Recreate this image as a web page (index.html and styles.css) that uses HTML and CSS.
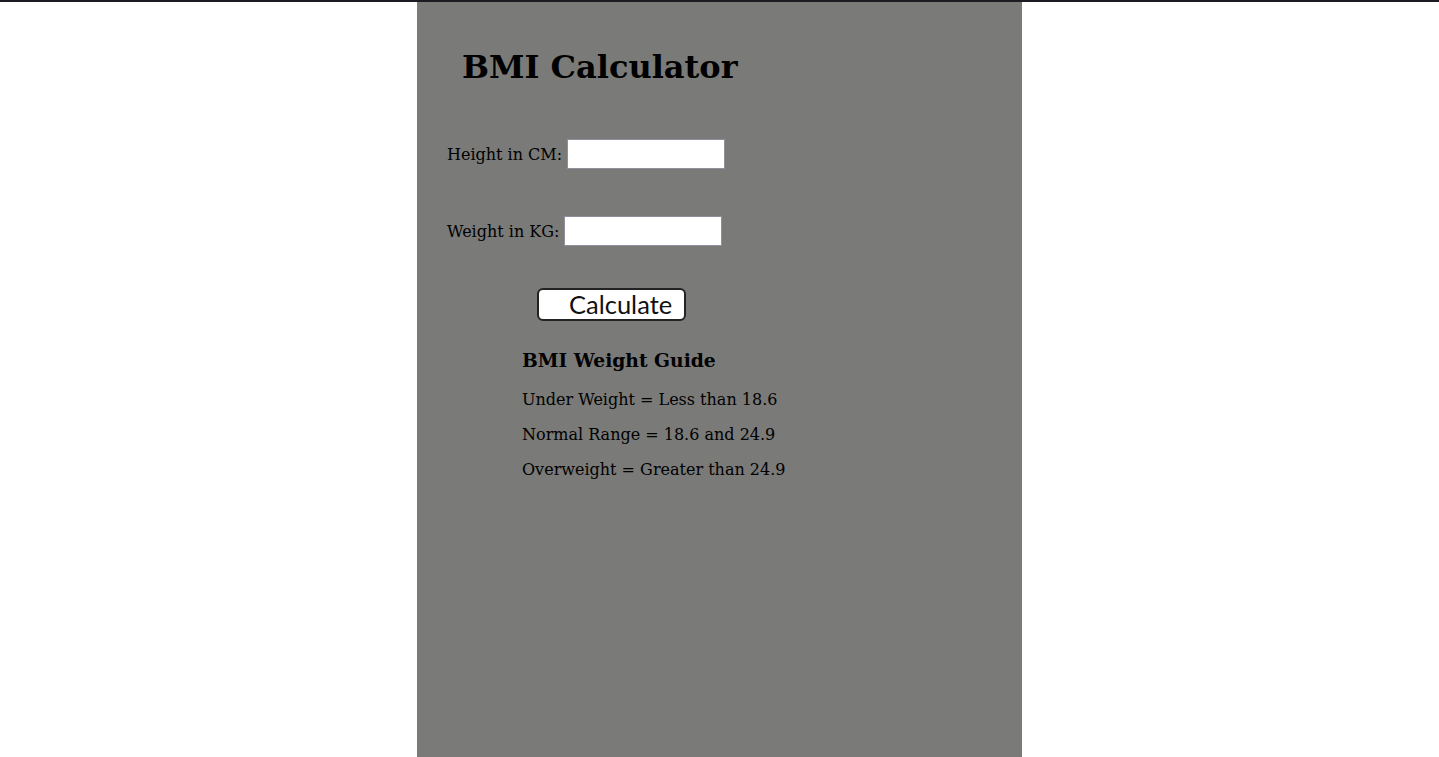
FILE: index.html
```html
<!DOCTYPE html>
<html lang="en">
<head>
<meta charset="utf-8">
<title>BMI Calculator</title>
<link rel="stylesheet" href="styles.css">
</head>
<body>
<div class="calculator">
  <h1 class="title">BMI Calculator</h1>
  <div class="field field-height">
    <label for="height">Height in CM:</label>
    <input type="text" id="height" class="input">
  </div>
  <div class="field field-weight">
    <label for="weight">Weight in KG:</label>
    <input type="text" id="weight" class="input">
  </div>
  <button class="calc-btn" type="button">Calculate</button>
  <div class="guide">
    <h3 class="guide-title">BMI Weight Guide</h3>
    <p>Under Weight = Less than 18.6</p>
    <p>Normal Range = 18.6 and 24.9</p>
    <p>Overweight = Greater than 24.9</p>
  </div>
</div>
</body>
</html>
```
FILE: styles.css
```css
html, body {
  margin: 0;
  padding: 0;
}
body {
  background: #ffffff;
  border-top: 2px solid #1b1b22;
  font-family: "DejaVu Serif", serif;
  color: #000;
}
.calculator {
  display: flow-root;
  width: 605px;
  min-height: 830px;
  margin: 0 auto;
  padding: 0 30px;
  box-sizing: border-box;
  background: #7a7a78;
}
.title {
  margin: 46px 0 0 15px;
  font-size: 32px;
  font-weight: bold;
  line-height: normal;
}
.field {
  display: flex;
  align-items: center;
  gap: 5px;
  font-size: 16px;
}
.field-height {
  margin-top: 53px;
}
.field-weight {
  margin-top: 47px;
}
.input {
  width: 158px;
  height: 30px;
  box-sizing: border-box;
  margin: 0;
  border: 1px solid #8f8f9d;
  border-radius: 0;
  background: #fff;
  padding: 2px 4px;
}
.calc-btn {
  display: block;
  width: 149px;
  height: 33px;
  box-sizing: border-box;
  margin: 42px 0 0 90px;
  padding: 0 12px 0 30px;
  text-align: left;
  background: #fff;
  border: 2px solid #232323;
  border-radius: 6px;
  font-family: "Lato", "Noto Sans", sans-serif;
  font-size: 25.5px;
  line-height: 27px;
  color: #111;
}
.guide {
  margin-left: 75px;
}
.guide-title {
  margin: 28px 0 18.72px;
  font-size: 18.72px;
  font-weight: bold;
}
.guide p {
  margin: 16px 0;
  font-size: 16px;
}
```
